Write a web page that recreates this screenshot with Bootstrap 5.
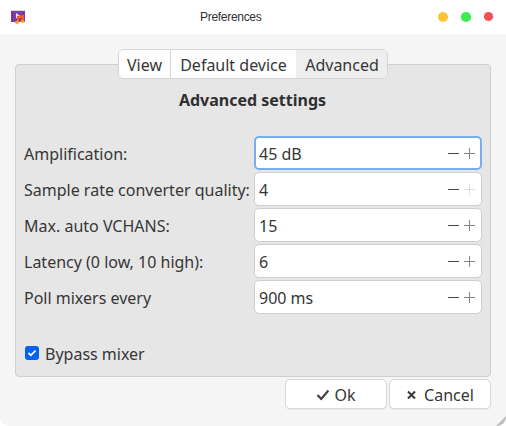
<!DOCTYPE html>
<html lang="en">
<head>
<meta charset="utf-8">
<meta name="viewport" content="width=device-width, initial-scale=1">
<title>Preferences</title>
<link href="https://cdn.jsdelivr.net/npm/bootstrap@5.3.0/dist/css/bootstrap.min.css" rel="stylesheet">
<style>
body{background:#fff;color:#363636;font:16px/24px "Noto Sans",sans-serif}
.window{width:506px;height:426px;background:#f5f5f5;border-radius:0 0 9px 9px}
.titlebar{height:34px;background:#fff;display:grid;grid-template-columns:189px auto 1fr;padding:0 13px 0 11px}
.titlebar h1{font:12px/34px "Liberation Sans",sans-serif;margin:0;color:#303030;letter-spacing:-.3px}
.dots{gap:13px}
.content{padding:15px 15px 0}
.tabs{height:30px;margin-bottom:-15px;border:1px solid #d4d4d4;border-radius:6px;background:#fff;width:270px;overflow:hidden}
.tabs button{border:0;border-radius:0;background:#fff;color:#363636;padding:1px 0 0;font-size:16px;line-height:24px}
.tabs button+button{border-left:1px solid #d4d4d4}
.tabs .t-view{width:51px}.tabs .t-device{width:126px}
.tabs button.current{background:#eee;border-left-color:#eee}
.panel{height:313px;background:#e6e6e6;border:1px solid #cfcfcf;border-radius:4px;padding:23px 8px 0}
.panel h2{font-size:16px;font-weight:700;line-height:24px;margin:0 1px 24px 0;color:#303030}
.setting{height:34px;margin-bottom:2px}
.setting label{width:230px;padding-top:2px;white-space:nowrap}
.spin{width:228px;height:34px;background:#fff;border:1px solid #cfcfcf;border-radius:5px;padding:2px 5px 0 4px}
.spin.active{border:2px solid #78aeed;padding:1px 4px 0 3px}
.spin svg{margin:0 1px 0 0}
.bypass{margin-top:28px}
.bypass svg{margin:-2px 6px 0 1px}
.actions{gap:2px;padding-top:6px;margin-top:-4px}
.actions button{width:102px;height:30px;background:#fff;border:1px solid #d8d8d8;border-radius:5px;padding:2px 0 0;color:#363636;font-size:16px;line-height:24px;box-shadow:0 1px 1px #0000000d}
.actions .cross{margin:-1px 8px 0 0}
.grip{right:0;bottom:0}
</style>
</head>
<body>
<div class="window position-relative overflow-hidden">
  <header class="titlebar align-items-center">
    <svg width="14" height="14" viewBox="0 0 14 14"><path fill="#d8d8da" d="M0 0h14v2H0z"/><path fill="#7d3fa6" d="M0 1h14v11H0z"/><path fill="#4f267b" d="M1 3h1v1H1zm0 2h1v1H1zm0 2h1v1H1zm0 2h1v1H1zm11-6h1v1h-1z"/><path fill="#eee5f5" d="M5 3l4 2.7L5 8.5z"/><path fill="#ff5a24" d="M6 6l7-1v6h-2V8L8 8.4V12H6z"/><ellipse cx="6" cy="12.3" rx="1.9" ry="1.6" fill="#ff9d15"/><ellipse cx="11.4" cy="11.3" rx="1.8" ry="1.5" fill="#ff9d15"/></svg>
    <h1>Preferences</h1>
    <div class="dots d-flex justify-content-end align-items-center">
      <svg width="10" height="10" overflow="visible"><circle cx="5" cy="5" r="5.1" fill="#f9c53b"/></svg>
      <svg width="10" height="10" overflow="visible"><circle cx="5" cy="5" r="5.1" fill="#3beb4b"/></svg>
      <svg width="9" height="10" overflow="visible"><circle cx="4.5" cy="4.5" r="4.6" fill="#f25056"/></svg>
    </div>
  </header>
  <main class="content">
    <div class="tabs d-flex mx-auto position-relative">
      <button type="button" class="btn t-view">View</button>
      <button type="button" class="btn t-device">Default device</button>
      <button type="button" class="btn flex-fill current">Advanced</button>
    </div>
    <section class="panel">
      <h2 class="text-center">Advanced settings</h2>
      <div class="setting d-flex align-items-center"><label>Amplification:</label><div class="spin active d-flex align-items-center justify-content-between"><span>45 dB</span><svg width="28" height="12"><path fill="#484848" d="M1 5h11v1H1z"/><path fill="#858585" d="M17 5h11v1H17zM22 0h1v11h-1z"/></svg></div></div>
      <div class="setting d-flex align-items-center"><label>Sample rate converter quality:</label><div class="spin d-flex align-items-center justify-content-between"><span>4</span><svg width="28" height="12"><path fill="#484848" d="M1 5h11v1H1z"/><path fill="#dedede" d="M17 5h11v1H17zM22 0h1v11h-1z"/></svg></div></div>
      <div class="setting d-flex align-items-center"><label>Max. auto VCHANS:</label><div class="spin d-flex align-items-center justify-content-between"><span>15</span><svg width="28" height="12"><path fill="#484848" d="M1 5h11v1H1z"/><path fill="#858585" d="M17 5h11v1H17zM22 0h1v11h-1z"/></svg></div></div>
      <div class="setting d-flex align-items-center"><label>Latency (0 low, 10 high):</label><div class="spin d-flex align-items-center justify-content-between"><span>6</span><svg width="28" height="12"><path fill="#484848" d="M1 5h11v1H1z"/><path fill="#858585" d="M17 5h11v1H17zM22 0h1v11h-1z"/></svg></div></div>
      <div class="setting d-flex align-items-center"><label>Poll mixers every</label><div class="spin d-flex align-items-center justify-content-between"><span>900 ms</span><svg width="28" height="12"><path fill="#484848" d="M1 5h11v1H1z"/><path fill="#858585" d="M17 5h11v1H17zM22 0h1v11h-1z"/></svg></div></div>
      <div class="bypass d-flex align-items-center" role="checkbox" aria-checked="true"><svg width="14" height="14"><rect width="14" height="14" rx="3" fill="#0461f0"/><path d="M3.5 7l2.3 2.3L10.6 4.6" fill="none" stroke="#fff" stroke-width="1.8"/></svg><span>Bypass mixer</span></div>
    </section>
    <div class="actions d-flex justify-content-end">
      <button type="button" class="btn d-flex align-items-center justify-content-center"><svg class="me-1" width="14" height="12"><path d="M1.5 6l3.7 4L12.4 1.5" fill="none" stroke="#3b3b3b" stroke-width="2"/></svg><span>Ok</span></button>
      <button type="button" class="btn d-flex align-items-center justify-content-center"><svg class="cross" width="10" height="10"><path d="M2 1.5l7 7M9 1.5l-7 7" fill="none" stroke="#3b3b3b" stroke-width="2.1"/></svg><span>Cancel</span></button>
    </div>
  </main>
  <svg class="grip position-absolute" width="10" height="10"><path fill="#bdbdbd" d="M10 0v10H0z"/></svg>
</div>
<script src="https://cdn.jsdelivr.net/npm/bootstrap@5.3.0/dist/js/bootstrap.bundle.min.js"></script>
</body>
</html>
